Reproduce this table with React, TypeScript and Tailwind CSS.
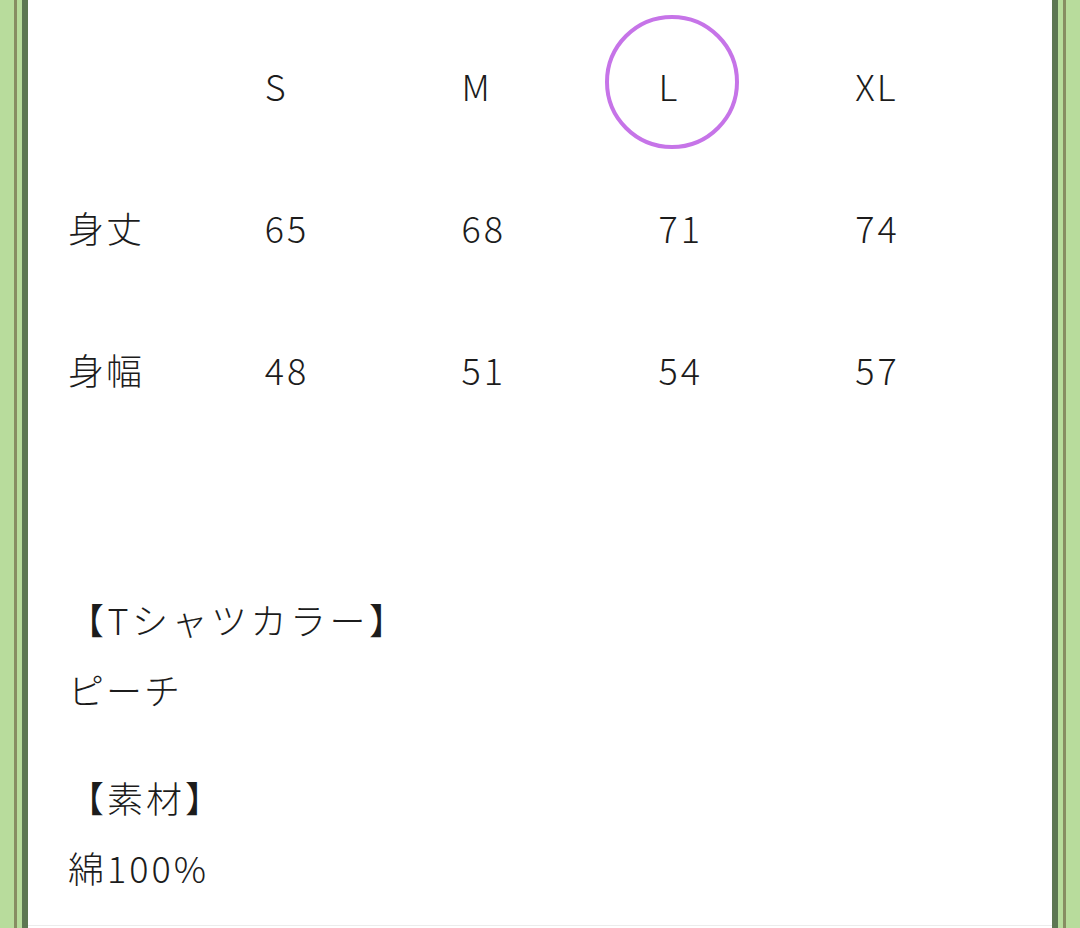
const SIZES = ['S', 'M', 'L', 'XL'];

const ROWS = [
  { label: '身丈', values: ['65', '68', '71', '74'] },
  { label: '身幅', values: ['48', '51', '54', '57'] },
];

export default function App() {
  return (
    <div className="h-[928px] bg-[#b8dc9c] px-[14px] overflow-hidden">
      <div className="h-full bg-[#b8dc9c] border-x-[3px] border-[#878d62] px-[5px]">
        <div className="h-full bg-white border-x-[6px] border-[#5d7752]">
          <div
            className="h-[926px] border-b border-[#ececec] pl-[40px] pt-[14px] text-[36px] font-light text-[#1c1c1c] tracking-[2px]"
            style={{ fontFamily: '"Noto Sans CJK JP", "Noto Sans", sans-serif' }}
          >
            <div className="flex h-[142px] items-center">
              <div className="w-[198px]" />
              {SIZES.map((s) => (
                <div key={s} className="relative w-[198px]">
                  {s === 'L' && (
                    <div className="absolute left-[-53px] top-[-43px] h-[134px] w-[134px] rounded-full border-[4px] border-[#c674e8]" />
                  )}
                  <span className="relative">{s}</span>
                </div>
              ))}
            </div>

            {ROWS.map((row) => (
              <div key={row.label} className="flex h-[142px] items-center">
                <div className="w-[198px]">{row.label}</div>
                {row.values.map((v, i) => (
                  <div key={i} className="w-[198px] tracking-[3px]">{v}</div>
                ))}
              </div>
            ))}

            <div className="mt-[144px] leading-[70px]">
              <div className="tracking-[3.5px]">【Tシャツカラー】</div>
              <div>ピーチ</div>
            </div>

            <div className="mt-[38px] leading-[70px]">
              <div className="tracking-[3px]">【素材】</div>
              <div className="tracking-[3px]">綿100%</div>
            </div>
          </div>
        </div>
      </div>
    </div>
  );
}
